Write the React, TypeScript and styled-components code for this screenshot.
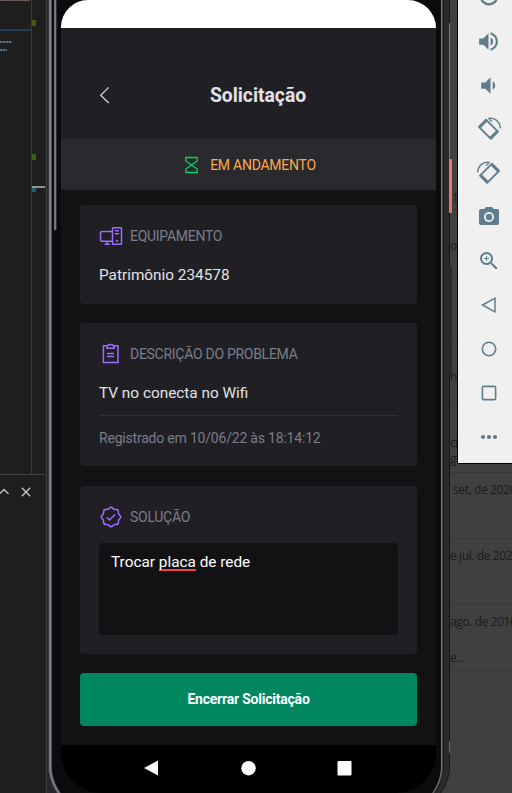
import React from "react";
import styled, { createGlobalStyle } from "styled-components";
import { PiDesktopTower, PiSealCheck } from "react-icons/pi";
import { MdVolumeUp, MdVolumeDown, MdPhotoCamera, MdZoomIn } from "react-icons/md";

const GlobalStyle = createGlobalStyle`
  * { box-sizing: border-box; }
  body { margin: 0; background: #1e1e1e; font-family: Roboto, sans-serif; }
  svg { display: block; flex: none; }
`;

const Desktop = styled.main`
  position: relative;
  display: grid;
  grid-template-columns: 45px 405px 62px;
  width: 512px;
  height: 793px;
  overflow: hidden;
`;

/* Editor window behind the emulator */
const Editor = styled.aside`
  display: flex;
  flex-direction: column;
  background: #1e1e1e;
`;
const EditorTop = styled.div`
  display: flex;
  height: 475px;
  border-bottom: 1px solid #424242;
`;
const CodeMap = styled.div`
  width: 32px;
  border-right: 1px solid #3a3a3a;
`;
const CodeMark = styled.div<{ $gap: number; $w: number; $h: number; $color: string }>`
  margin-top: ${(p) => p.$gap}px;
  width: ${(p) => p.$w}px;
  height: ${(p) => p.$h}px;
  background: ${(p) => p.$color};
`;
const CodeDots = styled(CodeMark)`
  background: repeating-linear-gradient(90deg, ${(p) => p.$color} 0 2px, #3c464c 2px 3px);
`;
const Ruler = styled.div`
  flex: 1;
`;
const PanelActions = styled.div`
  display: flex;
  gap: 12px;
  padding: 11px 0 0;
`;

/* Phone frame: the inset shadows are the metal edges, from the outside in */
const PhoneColumn = styled.div`
  height: 793px;
  padding-left: 3px;
  background: linear-gradient(90deg, #242425 0 1px, #3a3a3a 1px 2px, #262728 2px 30px, #404040 200px);
  overflow: hidden;
`;
const Phone = styled.section`
  height: 812px;
  padding-left: 13px;
  border-radius: 0 0 46px 46px;
  background:
    linear-gradient(90deg, transparent 6px, #777 6px 8px, #303030 8px 9px, transparent 9px) 0 0 / 100% 230px no-repeat,
    #0b0b0d;
  box-shadow:
    inset 1px 0 #33353a,
    inset 3px 0 #7a7e85,
    inset 4px 0 #4c4f55,
    inset -1px 0 #171718,
    inset -6px 0 #292b2c,
    inset -7px 0 #161718,
    inset -8px 0 #4a4a4a,
    inset -9px 0 #777;
`;
const Screen = styled.div`
  display: flex;
  flex-direction: column;
  width: 375px;
  height: 793px;
  background: #121214;
  border-radius: 27px 28px 40px 40px;
  overflow: hidden;
`;
const StatusBar = styled.div`
  height: 28px;
  background: #fff;
`;
const Header = styled.header`
  display: flex;
  align-items: center;
  height: 111px;
  padding: 22px 38px 0;
  background: #202024;
`;
const Title = styled.h1`
  flex: 1;
  margin: 1px 0 0 8px;
  text-align: center;
  font-size: 19.3px;
  line-height: 25px;
  font-weight: 700;
  color: #e1e1e6;
`;
const Progress = styled.div`
  display: flex;
  align-items: center;
  justify-content: center;
  gap: 12px;
  height: 51px;
  padding-left: 4px;
  background: #29292e;
  color: #fba94c;
  font-size: 14px;
  letter-spacing: -0.25px;
`;
const Content = styled.div`
  display: flex;
  flex-direction: column;
  height: 555px;
  padding: 15px 19px 19px;
`;
const Card = styled.article<{ $height: number; $gap: number }>`
  height: ${(p) => p.$height}px;
  margin-bottom: ${(p) => p.$gap}px;
  padding: 19px;
  border-radius: 4px;
  background: #202024;
`;
const CardTitle = styled.h2`
  display: flex;
  align-items: center;
  gap: 7px;
  height: 24px;
  margin: 0;
  font-size: 14px;
  font-weight: 400;
  color: #7c7c8a;
  letter-spacing: -0.28px;
  svg { color: #996dff; }
`;
const Value = styled.p`
  margin: 15px 0 0;
  font-size: 15.35px;
  line-height: 24px;
  color: #e1e1e6;
`;
const Registered = styled.p`
  margin: 10px 0 0;
  padding-top: 12px;
  border-top: 1px solid #323238;
  font-size: 14px;
  line-height: 21px;
  letter-spacing: -0.2px;
  color: #7c7c8a;
`;
const Answer = styled.div`
  height: 92px;
  margin-top: 14px;
  padding: 8px 12px;
  border-radius: 4px;
  background: #121214;
  color: #fff;
  font-size: 15.35px;
  line-height: 22px;
`;
const Misspelled = styled.span`
  box-shadow: inset 0 -2px #f04747;
  display: inline-block;
  line-height: 18px;
  height: 18px;
`;
const Submit = styled.button`
  height: 53px;
  padding: 0 0 1px;
  border: 0;
  border-radius: 4px;
  background: #00875f;
  color: #fff;
  font: 700 14px Roboto, sans-serif;
  letter-spacing: -0.22px;
`;
const NavBar = styled.nav`
  display: flex;
  justify-content: space-between;
  height: 48px;
  padding: 15px 84px 0 83px;
  background: #000;
`;

/* Page behind the emulator, on the right */
const Backdrop = styled.aside`
  display: flex;
  flex-direction: column;
  background: #404040;
  color: #1b1b1b;
  font: 12px/16px "Open Sans", sans-serif;
  letter-spacing: -0.4px;
  white-space: nowrap;
  overflow: hidden;
`;
const BackLine = styled.div<{ $h: number; $pad?: number; $indent?: number }>`
  height: ${(p) => p.$h}px;
  padding-top: ${(p) => p.$pad ?? 0}px;
  padding-left: ${(p) => p.$indent ?? 0}px;
  border-bottom: 1px solid #383838;
`;
const More = styled.div`
  margin-top: 20px;
`;
const SideKey = styled.div<{ $top: number; $h: number; $w: number; $color: string }>`
  position: absolute;
  left: 449px;
  top: ${(p) => p.$top}px;
  width: ${(p) => p.$w}px;
  height: ${(p) => p.$h}px;
  border-radius: 0 1px 1px 0;
  background: ${(p) => p.$color};
`;
const Tools = styled.div`
  position: absolute;
  right: 0;
  top: 0;
  width: 55px;
  height: 464px;
  padding-left: 7px;
  border: solid #000;
  border-width: 0 0 1px 1px;
  background: #f0f0f0;
  color: #607d8b;
  overflow: hidden;
`;
const ToolList = styled.div`
  display: grid;
  grid-auto-rows: 44px;
  place-items: center;
  margin-top: -25px;
`;

const stroke = { fill: "none", stroke: "currentColor" } as const;

const Rotate = ({ flip = false }: { flip?: boolean }) => (
  <svg width="24" height="24" viewBox="0 0 24 24" {...stroke}>
    <g transform={flip ? "translate(24 0) scale(-1 1)" : undefined}>
      <path d="M9 2.7 L1.9 9.8 L13.9 21.8 L21 14.7 Z" strokeWidth="1.9" strokeLinejoin="round" />
      <path d="M9.3 3.7 L2.9 10.1 M13.6 20.8 L20 14.4" strokeWidth="2.6" />
      <path d="M11.5 1.3 C17.5 .3 23 4.5 23.4 11.4 M11.4 1.3 L15 4.6" strokeWidth="1.4" />
    </g>
  </svg>
);

export default function App() {
  return (
    <>
      <GlobalStyle />
      <Desktop>
        <Editor>
          <EditorTop>
            <CodeMap>
              <CodeDots $gap={0} $w={30} $h={1} $color="#76645a" />
              <CodeMark $gap={28} $w={31} $h={2} $color="#263b55" />
              <CodeDots $gap={10} $w={12} $h={2} $color="#527080" />
              <CodeDots $gap={6} $w={7} $h={2} $color="#527080" />
            </CodeMap>
            <Ruler>
              <CodeMark $gap={20} $w={4} $h={6} $color="#3d6013" />
              <CodeMark $gap={128} $w={4} $h={6} $color="#3d6013" />
              <CodeMark $gap={26} $w={13} $h={2} $color="#8e9495" />
              <CodeMark $gap={0} $w={4} $h={4} $color="#1b6078" />
            </Ruler>
          </EditorTop>
          <PanelActions>
            <svg width="9" height="12" viewBox="0 0 9 12" {...stroke} color="#c5c5c5"><path d="M0 7.5 L4 3.5 L8.5 8" strokeWidth="1.3" /></svg>
            <svg width="10" height="12" viewBox="0 0 10 12" {...stroke} color="#c5c5c5"><path d="M.8 1.8 L9.2 10.2 M9.2 1.8 L.8 10.2" strokeWidth="1.4" /></svg>
          </PanelActions>
        </Editor>
        <PhoneColumn>
          <Phone>
            <Screen>
              <StatusBar />
              <Header>
                <svg width="11" height="18" viewBox="0 0 11 18" {...stroke} color="#d0d0d4"><path d="M9.7 1.4 L1.7 9.2 L9.7 17" strokeWidth="1.3" /></svg>
                <Title>Solicitação</Title>
              </Header>
              <Progress>
                <svg width="13" height="18" viewBox="0 0 13 18" {...stroke} color="#04d361">
                  <path d="M.8 1.5 H12.2 V5 L.8 13 V16.5 H12.2 V13 L.8 5 Z" strokeWidth="1.3" />
                </svg>
                EM ANDAMENTO
              </Progress>
              <Content>
                <Card $height={99} $gap={19}>
                  <CardTitle><PiDesktopTower size={24} />EQUIPAMENTO</CardTitle>
                  <Value>Patrimônio 234578</Value>
                </Card>
                <Card $height={143} $gap={20}>
                  <CardTitle>
                    <svg width="24" height="24" viewBox="0 0 24 24" {...stroke}>
                      <path d="M8.5 3.8 H4.4 V20.5 H19 V3.8 H14.5" strokeWidth="1.5" />
                      <path d="M8 6.3 V5.5 C8 1.4 15.2 1.4 15.2 5.5 V6.3 Z M8 11.5 H15 M8 14.5 H15" strokeWidth="1.5" />
                    </svg>
                    DESCRIÇÃO DO PROBLEMA
                  </CardTitle>
                  <Value>TV no conecta no Wifi</Value>
                  <Registered>Registrado em 10/06/22 às 18:14:12</Registered>
                </Card>
                <Card $height={168} $gap={19}>
                  <CardTitle><PiSealCheck size={24} />SOLUÇÃO</CardTitle>
                  <Answer>Trocar <Misspelled>placa</Misspelled> de rede</Answer>
                </Card>
                <Submit>Encerrar Solicitação</Submit>
              </Content>
              <NavBar>
                <svg width="15" height="16" viewBox="0 0 15 16"><path d="M0 8 L14 .5 V15.5 Z" fill="#fff" /></svg>
                <svg width="15" height="16" viewBox="0 0 15 16"><circle cx="7.5" cy="8.2" r="7.2" fill="#fff" /></svg>
                <svg width="15" height="16" viewBox="0 0 15 16"><rect x=".5" y="1" width="14" height="14.5" rx="1" fill="#fff" /></svg>
              </NavBar>
            </Screen>
          </Phone>
        </PhoneColumn>
        <Backdrop>
          <BackLine $h={47} />
          <BackLine $h={48} />
          <BackLine $h={114} $pad={95} $indent={2}>16</BackLine>
          <BackLine $h={66} $pad={29}>o</BackLine>
          <BackLine $h={66} />
          <BackLine $h={66} $pad={28}>no</BackLine>
          <BackLine $h={66} $pad={28}>ci<br />gr</BackLine>
          <BackLine $h={66} $pad={9} $indent={3}>set. de 2020</BackLine>
          <BackLine $h={66} $pad={9}>e jul. de 2020</BackLine>
          <BackLine $h={66} $pad={9}>ago. de 2016<More>e...</More></BackLine>
        </Backdrop>
        <SideKey $top={23} $h={136} $w={1} $color="#777" />
        <SideKey $top={159} $h={54} $w={3} $color="#e27962" />
        <SideKey $top={267} $h={107} $w={3} $color="#292929" />
        <SideKey $top={741} $h={12} $w={1} $color="#686868" />
        <Tools>
          <ToolList>
            <svg width="24" height="24" viewBox="0 0 24 24" {...stroke}><circle cx="12" cy="11" r="8.3" strokeWidth="2.2" /></svg>
            <MdVolumeUp size={25} />
            <MdVolumeDown size={25} />
            <Rotate />
            <Rotate flip />
            <MdPhotoCamera size={24} />
            <MdZoomIn size={24} />
            <svg width="24" height="24" viewBox="0 0 24 24" {...stroke}><path d="M5.5 12 L18 5.2 V18.8 Z" strokeWidth="1.5" /></svg>
            <svg width="24" height="24" viewBox="0 0 24 24" {...stroke}><circle cx="12" cy="12" r="6.7" strokeWidth="1.6" /></svg>
            <svg width="24" height="24" viewBox="0 0 24 24" {...stroke}><rect x="5.4" y="5.4" width="13.2" height="13.2" rx="1" strokeWidth="1.6" /></svg>
            <svg width="24" height="24" viewBox="0 0 24 24" fill="currentColor"><circle cx="6" cy="12" r="2.1" /><circle cx="12" cy="12" r="2.1" /><circle cx="18" cy="12" r="2.1" /></svg>
          </ToolList>
        </Tools>
      </Desktop>
    </>
  );
}
